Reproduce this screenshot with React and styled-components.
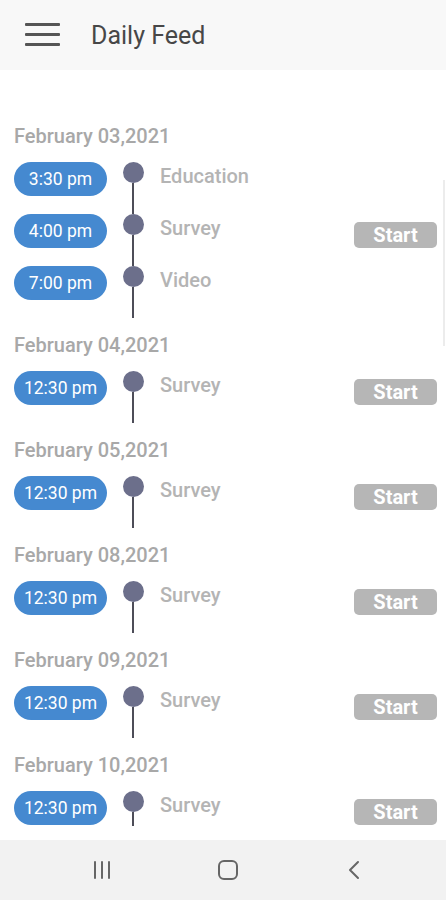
import React from 'react';
import styled, { createGlobalStyle } from 'styled-components';

const feed = [
  {
    date: 'February 03,2021',
    items: [
      { time: '3:30 pm', label: 'Education' },
      { time: '4:00 pm', label: 'Survey' },
      { time: '7:00 pm', label: 'Video' },
    ],
  },
  { date: 'February 04,2021', items: [{ time: '12:30 pm', label: 'Survey' }] },
  { date: 'February 05,2021', items: [{ time: '12:30 pm', label: 'Survey' }] },
  { date: 'February 08,2021', items: [{ time: '12:30 pm', label: 'Survey' }] },
  { date: 'February 09,2021', items: [{ time: '12:30 pm', label: 'Survey' }] },
  { date: 'February 10,2021', items: [{ time: '12:30 pm', label: 'Survey' }] },
];

const App = () => {
  return (
    <>
      <GlobalStyle />
      <Screen>
        <Header>
          <Burger>
            <span />
            <span />
            <span />
          </Burger>
          <Title>Daily Feed</Title>
        </Header>
        <Content>
          <ScrollThumb />
          <List>
            {feed.map((group) => (
              <Group key={group.date}>
                <DateLabel>{group.date}</DateLabel>
                <GroupBody>
                  <Rows>
                    {group.items.map((item) => (
                      <Row key={item.time + item.label}>
                        <TimePill>{item.time}</TimePill>
                        <Marker>
                          <Dot />
                          <Stem />
                        </Marker>
                        <Activity>{item.label}</Activity>
                      </Row>
                    ))}
                  </Rows>
                  <StartButton>Start</StartButton>
                </GroupBody>
              </Group>
            ))}
          </List>
        </Content>
        <NavBar>
          <NavIcon aria-label="recent">
            <svg width="20" height="20" viewBox="0 0 20 20">
              <g stroke="#666" strokeWidth="2" strokeLinecap="round">
                <line x1="3" y1="2" x2="3" y2="18" />
                <line x1="10" y1="2" x2="10" y2="18" />
                <line x1="17" y1="2" x2="17" y2="18" />
              </g>
            </svg>
          </NavIcon>
          <NavIcon aria-label="home">
            <svg width="22" height="22" viewBox="0 0 22 22">
              <rect x="2" y="2" width="18" height="18" rx="5" fill="none" stroke="#666" strokeWidth="2" />
            </svg>
          </NavIcon>
          <NavIcon aria-label="back">
            <svg width="16" height="20" viewBox="0 0 16 20">
              <polyline points="12,2 4,10 12,18" fill="none" stroke="#666" strokeWidth="2" strokeLinecap="round" strokeLinejoin="round" />
            </svg>
          </NavIcon>
        </NavBar>
      </Screen>
    </>
  );
};

const GlobalStyle = createGlobalStyle`
  body {
    margin: 0;
    background: #fff;
    font-family: Roboto, "Liberation Sans", sans-serif;
  }
`;

const Screen = styled.div`
  width: 446px;
  height: 900px;
  display: flex;
  flex-direction: column;
  overflow: hidden;
  background: #fff;
`;

const Header = styled.header`
  height: 70px;
  flex-shrink: 0;
  display: flex;
  align-items: center;
  background: #f8f8f8;
  padding-left: 25px;
  box-sizing: border-box;
`;

const Burger = styled.div`
  width: 35px;
  display: flex;
  flex-direction: column;
  gap: 7px;
  margin-top: -2px;

  span {
    display: block;
    height: 3px;
    background: #555;
    border-radius: 1px;
  }
`;

const Title = styled.h1`
  margin: 1px 0 0 31px;
  font-size: 25px;
  font-weight: 400;
  color: #474747;
`;

const Content = styled.main`
  position: relative;
  flex: 1;
  min-height: 0;
  display: flex;
  flex-direction: column;
  padding: 53px 9px 14px 14px;
`;

const List = styled.div`
  flex: 1;
  min-height: 0;
  overflow: hidden;
`;

const ScrollThumb = styled.div`
  position: absolute;
  right: 1px;
  top: 110px;
  width: 2px;
  height: 166px;
  background: #ececec;
`;

const Group = styled.section`
  margin-bottom: 14px;
`;

const DateLabel = styled.div`
  height: 24px;
  line-height: 26px;
  font-size: 20px;
  font-weight: 500;
  color: #a8a8a8;
  margin-bottom: 15px;
`;

const GroupBody = styled.div`
  display: flex;
  justify-content: space-between;
`;

const Rows = styled.div`
  display: flex;
  flex-direction: column;
`;

const Row = styled.div`
  height: 52px;
  display: grid;
  grid-template-columns: 93px 22px 1fr;
  column-gap: 15px;
  align-items: start;
`;

const TimePill = styled.div`
  height: 34px;
  border-radius: 17px;
  background: #4589d0;
  color: #fff;
  font-size: 17.5px;
  display: flex;
  align-items: center;
  justify-content: center;
`;

const Marker = styled.div`
  height: 52px;
  display: flex;
  flex-direction: column;
  align-items: center;
`;

const Dot = styled.div`
  width: 21px;
  height: 21px;
  border-radius: 50%;
  background: #6c6f8b;
  flex-shrink: 0;
`;

const Stem = styled.div`
  width: 2px;
  flex: 1;
  background: #4d4d58;
`;

const Activity = styled.div`
  padding-top: 2px;
  font-size: 20px;
  font-weight: 500;
  color: #b4b4b4;
  margin-left: 1px;
`;

const StartButton = styled.button`
  align-self: center;
  margin-bottom: 10px;
  width: 83px;
  height: 26px;
  border: none;
  border-radius: 5px;
  background: #b6b6b6;
  color: #fff;
  font-family: inherit;
  font-size: 20px;
  font-weight: 700;
  padding: 0;
`;

const NavBar = styled.nav`
  height: 60px;
  flex-shrink: 0;
  display: flex;
  justify-content: space-between;
  align-items: center;
  background: #f2f2f2;
  padding: 0 77px 0 87px;
`;

const NavIcon = styled.div`
  width: 30px;
  display: flex;
  justify-content: center;
`;

export default App;
